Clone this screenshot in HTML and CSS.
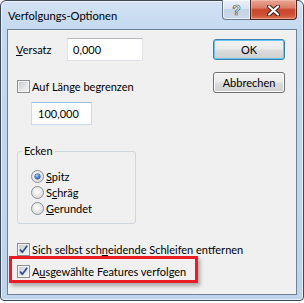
FILE: index.html
```html
<!DOCTYPE html>
<html lang="de">
<head>
<meta charset="utf-8">
<title>Verfolgungs-Optionen</title>
<link rel="stylesheet" href="styles.css">
</head>
<body>
<div class="window">
  <div class="titlebar">
    <span class="title">Verfolgungs-Optionen</span>
    <div class="caption-buttons">
      <div class="cbtn help"><span class="qmark">?</span></div>
      <div class="cbtn close">
        <svg width="13" height="11" viewBox="0 0 13 11">
          <path d="M2 1.5 L11 9.5 M11 1.5 L2 9.5" stroke="#43211b" stroke-width="4.2" stroke-linecap="round" fill="none"/>
          <path d="M2 1.5 L11 9.5 M11 1.5 L2 9.5" stroke="#ffffff" stroke-width="2.2" stroke-linecap="round" fill="none"/>
        </svg>
      </div>
    </div>
  </div>
  <div class="client">
    <div class="main">
      <div class="left">
        <div class="field-row">
          <span class="lbl"><u>V</u>ersatz</span>
          <div class="textbox tb-offset">0,000</div>
        </div>
        <div class="check-row cr-length">
          <span class="checkbox"></span>
          <span class="ctext">Auf Länge begrenzen</span>
        </div>
        <div class="textbox tb-length">100,000</div>
        <fieldset class="group">
          <legend class="group-title">Ecken</legend>
          <div class="radios">
            <div class="radio-row"><span class="radio on"></span><span class="rtext"><u>S</u>pitz</span></div>
            <div class="radio-row"><span class="radio"></span><span class="rtext">S<u>c</u>hräg</span></div>
            <div class="radio-row"><span class="radio"></span><span class="rtext"><u>G</u>erundet</span></div>
          </div>
        </fieldset>
      </div>
      <div class="buttons">
        <div class="btn btn-default">OK</div>
        <div class="btn btn-cancel">Abbrechen</div>
      </div>
    </div>
    <div class="check-row cr-loops">
      <span class="checkbox checked">
        <svg width="11" height="11" viewBox="0 0 11 11"><path d="M2 5.5 L4.3 8.3 L9.2 1.8" stroke="#2c4d8e" stroke-width="1.7" fill="none" stroke-linejoin="round"/></svg>
      </span>
      <span class="ctext">Sich selbst sch<u>n</u>eidende Schleifen entfernen</span>
    </div>
    <div class="highlight">
      <div class="check-row">
        <span class="checkbox checked">
          <svg width="11" height="11" viewBox="0 0 11 11"><path d="M2 5.5 L4.3 8.3 L9.2 1.8" stroke="#2c4d8e" stroke-width="1.7" fill="none" stroke-linejoin="round"/></svg>
        </span>
        <span class="ctext">A<u>u</u>sgewählte Features verfolgen</span>
      </div>
    </div>
  </div>
</div>
</body>
</html>
```
FILE: styles.css
```css
* { box-sizing: border-box; }

html, body {
  margin: 0;
  padding: 0;
  background: #ffffff;
}

body {
  font-family: Lato, "Liberation Sans", sans-serif;
  font-size: 11px;
  color: #000000;
}

u {
  text-decoration: underline;
  text-underline-offset: 1px;
}

/* ---------- window frame ---------- */
.window {
  width: 304px;
  height: 301px;
  border: 1px solid #3e4a5a;
  border-radius: 6px 6px 4px 4px;
  background: linear-gradient(#d3e3f4 0px, #c4d9f0 28px, #bed4ed 100%);
  box-shadow: inset 0 0 0 1px rgba(255, 255, 255, 0.55);
  padding: 0 6px 5px 6px;
  display: flex;
  flex-direction: column;
}

.titlebar {
  height: 28px;
  display: flex;
  align-items: flex-start;
}

.title {
  margin-left: 1px;
  padding-top: 7px;
  line-height: 15px;
  font-size: 11.2px;
  color: #000000;
}

.caption-buttons {
  margin-left: auto;
  margin-top: -1px;
  display: flex;
}

.cbtn {
  height: 20px;
  display: flex;
  align-items: center;
  justify-content: center;
}

.help {
  width: 28px;
  border: 1px solid #6b7a8e;
  border-right: none;
  border-top: none;
  border-radius: 0 0 0 4px;
  background: linear-gradient(#eaf1f8 0%, #d9e4f0 45%, #c5d4e5 50%, #cbd9ea 100%);
  box-shadow: inset 0 0 0 1px rgba(255, 255, 255, 0.6);
}

.qmark {
  font-family: "Liberation Sans", sans-serif;
  font-weight: bold;
  font-size: 14px;
  line-height: 14px;
  color: #ffffff;
  -webkit-text-stroke: 0.6px #3b4756;
  margin-top: 1px;
}

.close {
  width: 47px;
  border: 1px solid #4d2820;
  border-top: none;
  border-radius: 0 0 4px 0;
  background: linear-gradient(#e9a696 0%, #dc7f69 40%, #c9452b 52%, #cf5236 80%, #dc7a5c 100%);
  box-shadow: inset 0 0 0 1px rgba(255, 210, 195, 0.45);
}

.close svg { display: block; margin-top: 1px; }

/* ---------- client area ---------- */
.client {
  flex: 1;
  border: 1px solid #6f8096;
  background: #f0f0f0;
  display: flex;
  flex-direction: column;
}

.main {
  display: flex;
}

.left {
  display: flex;
  flex-direction: column;
  padding-left: 8px;
}

.field-row {
  margin-top: 8px;
  height: 23px;
  display: flex;
  align-items: center;
}

.lbl {
  width: 51px;
  line-height: 15px;
}

.textbox {
  height: 23px;
  background: #ffffff;
  line-height: 21px;
  display: flex;
  align-items: center;
}

.tb-offset {
  width: 76px;
  padding-left: 5px;
  border: 1px solid #e2e3ea;
  border-top-color: #b6b9be;
}

.tb-length {
  width: 61px;
  margin-top: 9px;
  margin-left: 15px;
  padding-left: 6px;
  border: 1px solid #c9dcef;
  border-top-color: #9fbfe0;
}

/* ---------- check boxes ---------- */
.check-row {
  height: 13px;
  display: flex;
  align-items: center;
  white-space: nowrap;
}

.cr-length {
  margin-top: 19px;
  margin-left: 1px;
}

.cr-loops {
  margin-top: 19px;
  margin-left: 9px;
}

.checkbox {
  width: 13px;
  height: 13px;
  flex: none;
  border: 1px solid #8e8f8f;
  background: linear-gradient(135deg, #c4c7cb 0%, #e3e4e6 55%, #f7f7f7 100%);
  box-shadow: inset 0 0 0 1px #f4f4f4;
  display: flex;
  align-items: center;
  justify-content: center;
}

.checkbox svg { display: block; }

.ctext {
  margin-left: 2px;
  line-height: 15px;
}

/* ---------- group box ---------- */
.group {
  margin: 19px 0 0 1px;
  width: 119px;
  padding: 0 0 7px 0;
  border: 1px solid #cfd6dc;
  border-radius: 3px;
  min-width: 0;
}

.group-title {
  margin-left: 4px;
  padding: 0 2px;
  line-height: 14px;
}

.radios {
  padding: 10px 0 0 13px;
}

.radio-row {
  height: 16px;
  display: flex;
  align-items: center;
}

.radio {
  position: relative;
  width: 13px;
  height: 13px;
  flex: none;
  border-radius: 50%;
  border: 1px solid #8d9095;
  background: radial-gradient(circle at 45% 40%, #fdfdfd 0%, #eaeaea 45%, #cfd1d4 100%);
}

.radio.on::after {
  content: "";
  position: absolute;
  left: 3px;
  top: 3px;
  width: 5px;
  height: 5px;
  border-radius: 50%;
  background: radial-gradient(circle at 40% 35%, #bfe1ff 0%, #3a7fd9 45%, #153f8c 100%);
  box-shadow: 0 0 0 0.5px #1e3f7c;
}

.rtext {
  margin-left: 2px;
  line-height: 15px;
}

/* ---------- buttons ---------- */
.buttons {
  margin-left: auto;
  margin-right: 11px;
  padding-top: 9px;
  display: flex;
  flex-direction: column;
}

.btn {
  width: 72px;
  height: 21px;
  border-radius: 3px;
  display: flex;
  align-items: center;
  justify-content: center;
  line-height: 15px;
  background: linear-gradient(#f2f2f2 0%, #ebebeb 48%, #dddddd 52%, #cfcfcf 100%);
}

.btn-default {
  border: 1px solid #3c7fb1;
  box-shadow: inset 0 0 0 1px #63c7f1;
}

.btn-cancel {
  margin-top: 12px;
  border: 1px solid #707070;
  box-shadow: inset 0 0 0 1px #fcfcfc;
}

/* ---------- red annotation frame ---------- */
.highlight {
  margin-left: 1px;
  width: 189px;
  height: 27px;
  border: 3px solid #ec1c24;
  padding: 6px 0 0 5px;
  box-shadow: 2px 3px 4px rgba(0, 0, 0, 0.3);
}
```
